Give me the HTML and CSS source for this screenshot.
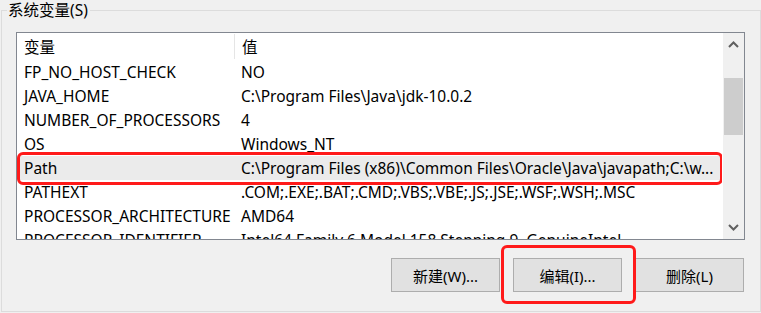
FILE: index.html
```html
<!DOCTYPE html>
<html lang="zh-CN">
<head>
  <meta charset="UTF-8">
  <title>系统变量</title>
  <link rel="stylesheet" href="styles.css">
</head>
<body>
  <div class="group">
    <div class="legend">系统变量(S)</div>

    <!-- variable list -->
    <div class="list">
      <div class="list-body">
        <div class="row head">
          <div class="cell name">变量</div>
          <div class="cell value">值</div>
        </div>
        <div class="row"><div class="cell name">FP_NO_HOST_CHECK</div><div class="cell value">NO</div></div>
        <div class="row"><div class="cell name">JAVA_HOME</div><div class="cell value">C:\Program Files\Java\jdk-10.0.2</div></div>
        <div class="row"><div class="cell name">NUMBER_OF_PROCESSORS</div><div class="cell value">4</div></div>
        <div class="row"><div class="cell name">OS</div><div class="cell value">Windows_NT</div></div>
        <div class="row selected"><div class="cell name">Path</div><div class="cell value">C:\Program Files (x86)\Common Files\Oracle\Java\javapath;C:\w...</div></div>
        <div class="row"><div class="cell name">PATHEXT</div><div class="cell value">.COM;.EXE;.BAT;.CMD;.VBS;.VBE;.JS;.JSE;.WSF;.WSH;.MSC</div></div>
        <div class="row"><div class="cell name">PROCESSOR_ARCHITECTURE</div><div class="cell value">AMD64</div></div>
        <div class="row"><div class="cell name">PROCESSOR_IDENTIFIER</div><div class="cell value">Intel64 Family 6 Model 158 Stepping 9, GenuineIntel</div></div>
        <div class="mark mark-row"></div>
      </div>
      <div class="scrollbar">
        <svg class="arrow" width="11" height="7" viewBox="0 0 11 7"><path d="M1 6 L5.5 1.5 L10 6" fill="none" stroke="#606060" stroke-width="2"/></svg>
        <div class="track"><div class="thumb"></div></div>
        <svg class="arrow" width="11" height="7" viewBox="0 0 11 7"><path d="M1 1 L5.5 5.5 L10 1" fill="none" stroke="#606060" stroke-width="2"/></svg>
      </div>
    </div>

    <!-- action buttons -->
    <div class="buttons">
      <button>新建(W)...</button>
      <div class="btn-wrap">
        <button>编辑(I)...</button>
        <div class="mark mark-btn"></div>
      </div>
      <button>删除(L)</button>
    </div>
  </div>
</body>
</html>
```

FILE: styles.css
```css
body {
  margin: 0;
  background: #f0f0f0;
  font-family: "Noto Sans", "Noto Sans CJK SC", sans-serif;
  font-size: 15.5px;
  color: #000;
}

/* Group box with caption on the border */
.group {
  margin: 10px 0 0 1px;
  width: 760px;
  height: 302px;
  box-sizing: border-box;
  border: 1px solid #dcdcdc;
  padding-left: 14px;
}
.legend {
  width: fit-content;
  margin: -10px 0 0 -9px;
  padding: 0 2px 0 1px;
  line-height: 18px;
  background: #f0f0f0;
}

/* List view */
.list {
  margin-top: 13px;
  width: 729px;
  height: 208px;
  box-sizing: border-box;
  border: 1px solid #828790;
  background: #fff;
  display: flex;
  overflow: hidden;
}
.list-body {
  position: relative;
  width: 706px;
  overflow: hidden;
}
.row {
  display: flex;
  height: 24px;
  align-items: center;
  white-space: nowrap;
}
.row.head {
  height: 27px;
}
.row.selected {
  background: #ebebeb;
}
.cell {
  padding-left: 7px;
}
.cell.name {
  width: 210px;
  flex: none;
}
.cell.value {
  flex: 1;
}
.head .cell.name {
  align-self: stretch;
  display: flex;
  align-items: center;
  border-right: 1px solid #e5e5e5;
  margin: 1px 0 0;
  height: 25px;
}

/* Scrollbar */
.scrollbar {
  width: 21px;
  background: #f0f0f0;
  display: flex;
  flex-direction: column;
  align-items: center;
  border-left: 1px solid #fff;
}
.arrow {
  flex: none;
  margin: 8px 0;
}
.track {
  flex: 1;
  width: 100%;
  padding-top: 22px;
}
.thumb {
  width: 19px;
  margin-left: 1px;
  height: 57px;
  background: #cdcdcd;
}

/* Buttons */
.buttons {
  display: flex;
  justify-content: flex-end;
  gap: 13px;
  width: 728px;
  margin-top: 18px;
}
.btn-wrap {
  position: relative;
  display: flex;
}
button {
  width: 109px;
  height: 34px;
  box-sizing: border-box;
  border: 1px solid #adadad;
  background: #e1e1e1;
  font-family: inherit;
  font-size: 15px;
  color: #000;
  padding: 0;
}

/* Red highlight marks */
.mark {
  position: absolute;
  border: 3px solid #ff1a1a;
  border-radius: 6px;
  pointer-events: none;
}
.mark-row {
  left: 0;
  width: 706px;
  top: 119px;
  height: 33px;
  box-sizing: border-box;
}
.mark-btn {
  left: -12px;
  right: -14px;
  top: -13px;
  bottom: -12px;
}
```
